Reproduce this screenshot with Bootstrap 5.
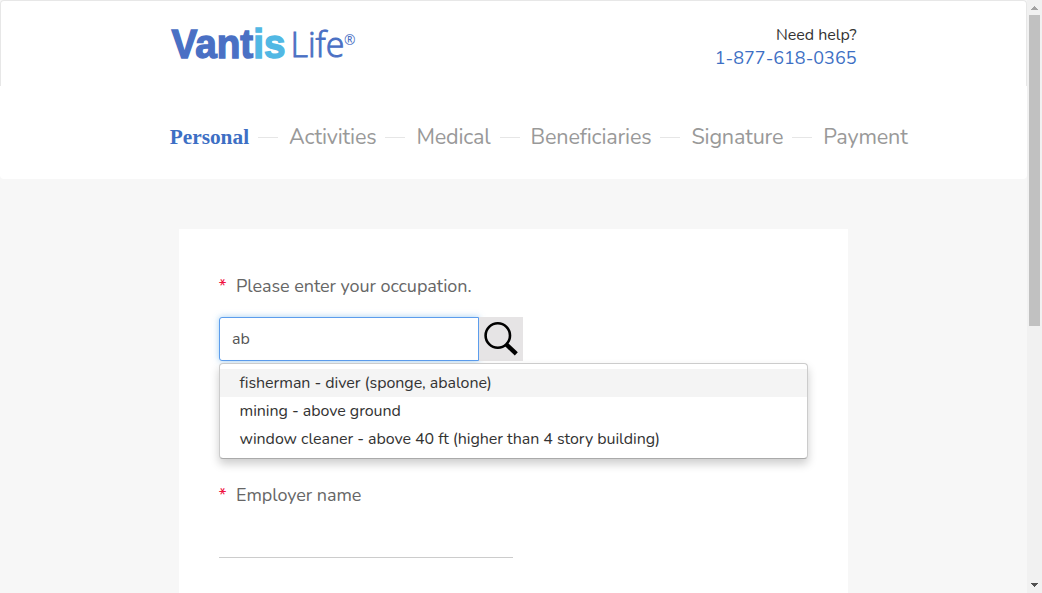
<!DOCTYPE html>
<html lang="en">
<head>
<meta charset="utf-8">
<meta name="viewport" content="width=device-width, initial-scale=1">
<title>Vantis Life - Personal</title>
<link href="https://cdn.jsdelivr.net/npm/bootstrap@5.3.0/dist/css/bootstrap.min.css" rel="stylesheet">
<style>
html, body { height: 100%; overflow: hidden; }
body { background: #f7f7f7; font-family: Nunito, Lato, sans-serif; font-size: 16px; color: #333; }
.app-view { height: 593px; }
.page-pane { width: 1027px; }
.top-bar { height: 86px; border: 1px solid #e7e7e7; border-bottom: 0; border-radius: 4px 4px 0 0; padding: 0 169.5px 0 169px; }
.brand-logo { width: 190px; height: 60px; margin-top: 12px; overflow: visible; }
.help-box { margin-top: 23px; line-height: 23px; }
.help-title { letter-spacing: -.03px; }
.help-phone { color: #3d6fc4; font-size: 18px; }
.step-bar { height: 93px; border-radius: 0 0 4px 4px; padding: 35px 0 0 169.7px; }
.step-link { color: #999; font-size: 21.6px; font-weight: 370; letter-spacing: -.17px; line-height: 32px; white-space: nowrap; }
.step-active { color: #3d6fc4; font-family: "Liberation Serif", serif; font-weight: 700; font-size: 21.33px; letter-spacing: 0; }
.step-line { width: 20px; height: 1px; background: #e6e6e6; margin: 16px 11px 0 9px; }
.form-panel { width: 669px; height: 364px; margin: 50px 0 0 179px; padding: 44px 40px 0; }
.field-label { color: #666; font-size: 18px; line-height: 26px; letter-spacing: -.06px; white-space: nowrap; }
.required-star { color: #f0113f; width: 17px; }
.required-star span { margin-left: -.5px; }
.combo-box { margin-top: 18px; height: 44px; }
.combo-input { width: 260px; height: 44px; font-size: 16px; color: #555; border: 1px solid #5c9ded; border-radius: 3px 0 0 3px; padding: 0 12px; box-shadow: 0 0 6px rgba(102,175,233,.6); }
.combo-input:focus { color: #555; border-color: #5c9ded; }
.search-btn { width: 44px; height: 44px; background: #e6e4e5; }
.suggestions { display: block; top: 46px; left: 0; width: 589px; height: 96px; padding: 5px 0; border: 1px solid #ccc; border-bottom-color: #aaa; border-radius: 4px; box-shadow: 0 5px 10px rgba(0,0,0,.2); }
.suggestions .dropdown-item { height: 28px; line-height: 28px; padding: 0 19.5px; color: #333; font-size: 16px; letter-spacing: -.05px; }
.suggestions .dropdown-item.current { background: #f4f4f4; }
.employer-field { margin-top: 121px; }
.line-input { width: 294px; height: 40px; margin-top: 10px; border-bottom: 1px solid #ccc; }
.scroll-rail { width: 15px; background: #f1f1f1; }
</style>
</head>
<body>
<div class="app-view d-flex overflow-hidden">
  <div class="page-pane flex-shrink-0">
    <header class="top-bar bg-white d-flex justify-content-between align-items-start">
      <svg class="brand-logo" viewBox="0 0 190 60" role="img" aria-label="Vantis Life">
        <text x="1.500" y="44.500" font-family="Liberation Sans, sans-serif" font-weight="700" font-size="40.500" stroke-width="1.400" textLength="114" lengthAdjust="spacingAndGlyphs" fill="#4a70c4" stroke="#4a70c4">Vant<tspan fill="#51b8e4" stroke="#51b8e4">is</tspan></text>
        <g fill="#4a70c4" stroke="#4a70c4" font-family="Open Sans, sans-serif" font-weight="300">
          <text x="120.500" y="44.300" font-size="35.500" stroke-width=".9" textLength="54" lengthAdjust="spacingAndGlyphs">Life</text>
          <text x="174" y="31.500" font-size="15" stroke="none" font-weight="400" textLength="11.500" lengthAdjust="spacingAndGlyphs">®</text>
        </g>
      </svg>
      <div class="help-box text-end">
        <div class="help-title">Need help?</div>
        <div class="help-phone">1-877-618-0365</div>
      </div>
    </header>
    <nav class="step-bar bg-white d-flex align-items-start">
      <span class="step-link step-active">Personal</span><i class="step-line"></i>
      <span class="step-link">Activities</span><i class="step-line"></i>
      <span class="step-link">Medical</span><i class="step-line"></i>
      <span class="step-link">Beneficiaries</span><i class="step-line"></i>
      <span class="step-link">Signature</span><i class="step-line"></i>
      <span class="step-link">Payment</span>
    </nav>
    <main class="form-panel bg-white">
      <label class="field-label d-flex" for="occupation"><span class="required-star"><span>*</span></span><span>Please enter your occupation.</span></label>
      <div class="combo-box position-relative d-flex">
        <input id="occupation" class="combo-input form-control" value="ab">
        <button class="search-btn border-0 p-0 d-flex" type="button" aria-label="Search">
          <svg width="44" height="44" viewBox="0 0 44 44" fill="none" stroke="#000"><circle cx="18.800" cy="18.500" r="12.200" stroke-width="2.600"/><path d="M27.300 27.500 37.300 36.800" stroke-width="4.400"/></svg>
        </button>
        <div class="suggestions dropdown-menu">
          <a class="dropdown-item current">fisherman - diver (sponge, abalone)</a>
          <a class="dropdown-item">mining - above ground</a>
          <a class="dropdown-item">window cleaner - above 40 ft (higher than 4 story building)</a>
        </div>
      </div>
      <div class="employer-field">
        <div class="field-label d-flex"><span class="required-star"><span>*</span></span><span>Employer name</span></div>
        <div class="line-input"></div>
      </div>
    </main>
  </div>
  <svg class="scroll-rail flex-shrink-0" width="15" height="593" viewBox="0 0 15 593" shape-rendering="crispEdges" aria-hidden="true">
    <path fill="#a3a3a3" d="M4 10h7L7.500 6z"/>
    <path fill="#c1c1c1" d="M2 15h11v311H2z"/>
    <path fill="#505050" d="M4 583h7l-3.500 4z"/>
  </svg>
</div>
<script src="https://cdn.jsdelivr.net/npm/bootstrap@5.3.0/dist/js/bootstrap.bundle.min.js"></script>
</body>
</html>
